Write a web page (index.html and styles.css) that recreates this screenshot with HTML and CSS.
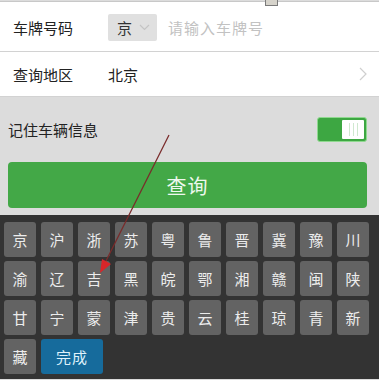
FILE: index.html
```html
<!DOCTYPE html>
<html lang="zh-CN">
<head>
<meta charset="utf-8">
<link rel="stylesheet" href="styles.css">
</head>
<body>
<div class="page">
  <div class="form">
    <div class="row row-plate">
      <span class="label">车牌号码</span>
      <span class="prov">京<svg class="caret" width="11" height="7" viewBox="0 0 11 7"><polyline points="1,1 5.5,5.5 10,1" fill="none" stroke="#c4c4c4" stroke-width="1.2"/></svg></span>
      <span class="placeholder">请输入车牌号</span>
    </div>
    <div class="row row-area">
      <span class="label">查询地区</span>
      <span class="value">北京</span>
      <svg class="chev" width="8" height="14" viewBox="0 0 8 14"><polyline points="1,1 7,7 1,13" fill="none" stroke="#cfcfcf" stroke-width="1.2"/></svg>
    </div>
  </div>
  <div class="remember">
    <span class="rlabel">记住车辆信息</span>
    <span class="toggle"><span class="thumb"><i></i><i></i><i></i></span></span>
  </div>
  <div class="btn-wrap"><div class="btn">查询</div></div>
  <div class="keyboard">
    <span class="key">京</span><span class="key">沪</span><span class="key">浙</span><span class="key">苏</span><span class="key">粤</span><span class="key">鲁</span><span class="key">晋</span><span class="key">冀</span><span class="key">豫</span><span class="key">川</span>
    <span class="key">渝</span><span class="key">辽</span><span class="key">吉</span><span class="key">黑</span><span class="key">皖</span><span class="key">鄂</span><span class="key">湘</span><span class="key">赣</span><span class="key">闽</span><span class="key">陕</span>
    <span class="key">甘</span><span class="key">宁</span><span class="key">蒙</span><span class="key">津</span><span class="key">贵</span><span class="key">云</span><span class="key">桂</span><span class="key">琼</span><span class="key">青</span><span class="key">新</span>
    <span class="key">藏</span><span class="key done">完成</span>
  </div>
  <span class="tab-mark"></span>
  <svg class="arrow" width="379" height="380" viewBox="0 0 379 380">
    <line x1="169" y1="135" x2="105" y2="263" stroke="#7a2a2a" stroke-width="1.2"/>
    <polygon points="100,273 102,259 111,264" fill="#d8262a"/>
  </svg>
</div>
</body>
</html>
```

FILE: styles.css
```css
* { box-sizing: border-box; }
html, body { margin: 0; padding: 0; }
body {
  width: 379px;
  height: 380px;
  overflow: hidden;
  background: #dcdcdc;
  font-family: "Noto Sans CJK SC", "Noto Sans", sans-serif;
}
.page {
  position: relative;
  width: 379px;
  height: 380px;
  padding-top: 1px;
  background: #dcdcdc;
}
.form {
  background: #fff;
  border-top: 1px solid #c8c8c8;
}
.row {
  display: flex;
  align-items: center;
  border-bottom: 1px solid #d2d2d2;
  padding-left: 13px;
  padding-right: 13px;
}
.row-plate { height: 50px; padding-top: 1px; }
.row-area { height: 45px; }
.label {
  width: 95px;
  font-size: 15px;
  color: #222;
  line-height: 1;
}
.prov {
  display: flex;
  align-items: center;
  width: 49px;
  height: 27px;
  background: #e0e0e0;
  border-radius: 2px;
  padding-left: 9px;
  font-size: 15px;
  color: #333;
  line-height: 1;
  gap: 7px;
}
.caret { margin-top: 1px; }
.placeholder {
  margin-left: 11px;
  font-size: 15px;
  letter-spacing: 1px;
  color: #c2c2c2;
  line-height: 1;
}
.value {
  flex: 1;
  font-size: 15px;
  color: #222;
  line-height: 1;
}
.chev { margin-right: -1px; }
.remember {
  display: flex;
  align-items: center;
  justify-content: space-between;
  height: 65px;
  padding: 0 12px 0 8px;
}
.rlabel {
  font-size: 15px;
  color: #222;
  line-height: 1;
}
.toggle {
  display: flex;
  justify-content: flex-end;
  align-items: center;
  width: 50px;
  height: 25px;
  padding: 2px;
  background: #3da742;
  border: 1px solid #8fd98f;
  border-radius: 3px;
}
.thumb {
  display: flex;
  justify-content: center;
  align-items: center;
  gap: 3px;
  width: 22px;
  height: 19px;
  background: #fff;
  border-radius: 1px;
}
.thumb i {
  display: block;
  width: 1px;
  height: 13px;
  background: #cfe8cf;
}
.btn-wrap {
  padding: 0 12px 7px 8px;
}
.btn {
  display: flex;
  align-items: center;
  justify-content: center;
  height: 46px;
  background: #43a847;
  border-radius: 4px;
  color: #eef8ee;
  font-size: 20px;
  letter-spacing: 1px;
}
.keyboard {
  display: grid;
  grid-template-columns: repeat(10, 32px);
  grid-auto-rows: 35px;
  column-gap: 5px;
  row-gap: 4px;
  height: 164px;
  padding: 7px 0 0 4px;
  background: #333;
}
.key {
  display: flex;
  align-items: center;
  justify-content: center;
  background: #636363;
  border-radius: 3px;
  color: #ececec;
  font-size: 15px;
  line-height: 1;
}
.key.done {
  grid-column: span 2;
  width: 62px;
  background: #166b9c;
  color: #dff1fb;
  letter-spacing: 1px;
}
.tab-mark {
  position: absolute;
  left: 265px;
  top: 0;
  width: 13px;
  height: 6px;
  background: #d6d3cb;
  border: 1px solid #7a7a7a;
  border-top: none;
}
.arrow {
  position: absolute;
  left: 0;
  top: 0;
  pointer-events: none;
}
```
